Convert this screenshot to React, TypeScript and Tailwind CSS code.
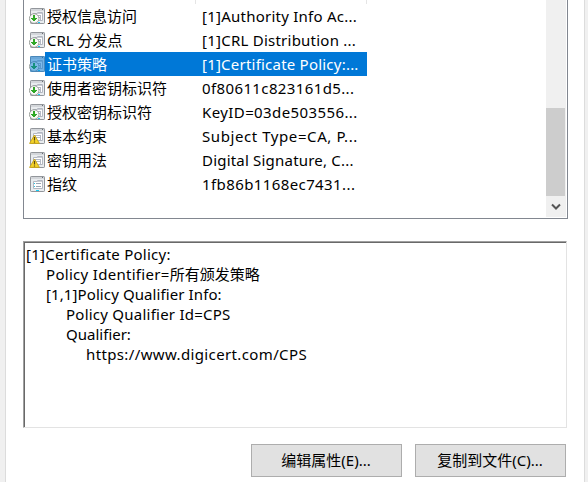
type Kind = "ext" | "warn" | "plain";

const rows: { kind: Kind; name: string; value: string; spacing: string; selected?: boolean }[] = [
  { kind: "ext", name: "授权信息访问", value: "[1]Authority Info Ac...", spacing: "tracking-[0.240px]" },
  { kind: "ext", name: "CRL 分发点", value: "[1]CRL Distribution ...", spacing: "tracking-[0.240px]" },
  { kind: "ext", name: "证书策略", value: "[1]Certificate Policy:...", spacing: "tracking-[0.220px]", selected: true },
  { kind: "ext", name: "使用者密钥标识符", value: "0f80611c823161d5...", spacing: "tracking-[0.380px]" },
  { kind: "ext", name: "授权密钥标识符", value: "KeyID=03de503556...", spacing: "tracking-[0.400px]" },
  { kind: "warn", name: "基本约束", value: "Subject Type=CA, P...", spacing: "tracking-[0.580px]" },
  { kind: "warn", name: "密钥用法", value: "Digital Signature, C...", spacing: "tracking-[0.200px]" },
  { kind: "plain", name: "指纹", value: "1fb86b1168ec7431...", spacing: "tracking-[0.400px]" },
];

const details = [
  { text: "[1]Certificate Policy:", indent: "pl-0", spacing: "tracking-[0.260px]" },
  { text: "Policy Identifier=", cjk: "所有颁发策略", indent: "pl-5", spacing: "tracking-[0.300px]" },
  { text: "[1,1]Policy Qualifier Info:", indent: "pl-5", spacing: "tracking-[0.100px]" },
  { text: "Policy Qualifier Id=CPS", indent: "pl-10", spacing: "tracking-[0.240px]" },
  { text: "Qualifier:", indent: "pl-10", spacing: "tracking-[0px]" },
  { text: "https://www.digicert.com/CPS", indent: "pl-[60px]", spacing: "tracking-[0.370px]" },
];

function FieldIcon({ kind, selected }: { kind: Kind; selected?: boolean }) {
  return (
    <svg width="17" height="16" viewBox="0 0 17 16" className="shrink-0">
      <rect x="1.5" y="0.5" width="14" height="15" rx=".7" fill="#e9ecef" stroke="#92969b" />
      <rect x="2" y="1" width="13" height="2" fill="#d3d6da" />
      <path d="M13 1.500h1" stroke="#686d74" />
      <path d="M4.500 12.500v-7h4v-1h5v8z" fill="#fff" stroke="#b2b7c1" />
      <path d="M9 5.500h4" stroke="#c9ccd4" />
      {kind === "plain" ? (
        <>
          <path d="M5 7.500h1M5 10.500h1" stroke="#24c6e8" />
          <path d="M7 7.500h5M7 10.500h5" stroke="#9ba5b5" />
          <path d="M7 14.500h3" stroke="#12cdf5" />
        </>
      ) : (
        <path d="M6 7.500h6M6 9.500h6M11.500 7v5" stroke="#b4b9c5" />
      )}
      {kind === "ext" && (
        <>
          <path d="M9 14.500h2" stroke="#16c8ee" />
          <circle cx="5.200" cy="10.500" r="4.800" fill="#f8f9f7" stroke="#858c87" strokeWidth=".8" />
          <path d="M4 7h2v3h2v1h-1v1h-1v1h-1v1h-0v-1H4v-1H3v-1H2v-1h2z" fill="#2fa827" />
        </>
      )}
      {kind === "warn" && (
        <>
          <path d="M5.500 7 .6 15.400h9.800z" fill="#f5d32a" stroke="#c3a013" strokeWidth=".9" strokeLinejoin="round" />
          <path d="M5.500 9v3.500M5.500 13.500v1" stroke="#5b4710" strokeWidth="1.200" />
        </>
      )}
      {selected && <rect x="1" width="15" height="16" rx="1" fill="#0078d7" opacity=".5" />}
    </svg>
  );
}

export default function App() {
  return (
    <div className="flex h-[482px] w-[588px] overflow-hidden bg-[#f0f0f0] pl-[5px] font-['Noto_Sans','Noto_Sans_CJK_SC',sans-serif] text-[15px] text-black">
      <main className="flex w-[580px] flex-col border-x border-[#dcdcdc] bg-white pl-[17px]">
        <section className="flex h-[219px] w-[545px] border-x border-b border-[#828790]">
          <div className="flex w-[522px] flex-col">
            <div className="flex h-1 w-[343px] shrink-0">
              <div className="w-[172px] border-r border-[#e5e5e5]" />
              <div className="w-[171px] border-r border-[#e5e5e5]" />
            </div>
            {rows.map((row) => (
              <div key={row.name} className="flex h-6 shrink-0 items-center pl-[5px]">
                <FieldIcon kind={row.kind} selected={row.selected} />
                <div className={`-ml-px flex h-6 w-[322px] items-center whitespace-pre pl-0.5 leading-6 ${row.selected ? "bg-[#0078d7] text-white" : ""}`}>
                  <span className="w-[155px]">{row.name}</span>
                  <span className={row.spacing}>{row.value}</span>
                </div>
              </div>
            ))}
          </div>
          <div className="flex h-[217px] w-5 flex-col justify-end bg-[#f0f0f0]">
            <div className="h-[88px] w-[19px] bg-[#cdcdcd]" />
            <div className="flex h-[21px] w-[19px] items-center justify-center">
              <svg width="10" height="8" viewBox="0 0 10 8">
                <path d="m1 1.500 4 4 4-4" fill="none" stroke="#555" strokeWidth="2" />
              </svg>
            </div>
          </div>
        </section>
        <section className="mt-[22px] h-[187px] w-[544px] border border-b-[#e3e3e3] border-l-[#a0a0a0] border-r-[#e3e3e3] border-t-[#a0a0a0]">
          <div className="h-[185px] border-l border-t border-[#696969] pl-px pt-px">
            {details.map((line) => (
              <div key={line.text} className={`h-5 whitespace-pre leading-5 ${line.indent}`}>
                <span className={line.spacing}>{line.text}</span>
                {line.cjk}
              </div>
            ))}
          </div>
        </section>
        <div className="mt-4 flex gap-[13px] pl-[228px]">
          <button className="h-[33px] w-[151px] border border-[#adadad] bg-[#e1e1e1] pr-px">编辑属性(E)...</button>
          <button className="h-[33px] w-[151px] border border-[#adadad] bg-[#e1e1e1] pr-px">复制到文件(C)...</button>
        </div>
      </main>
    </div>
  );
}
